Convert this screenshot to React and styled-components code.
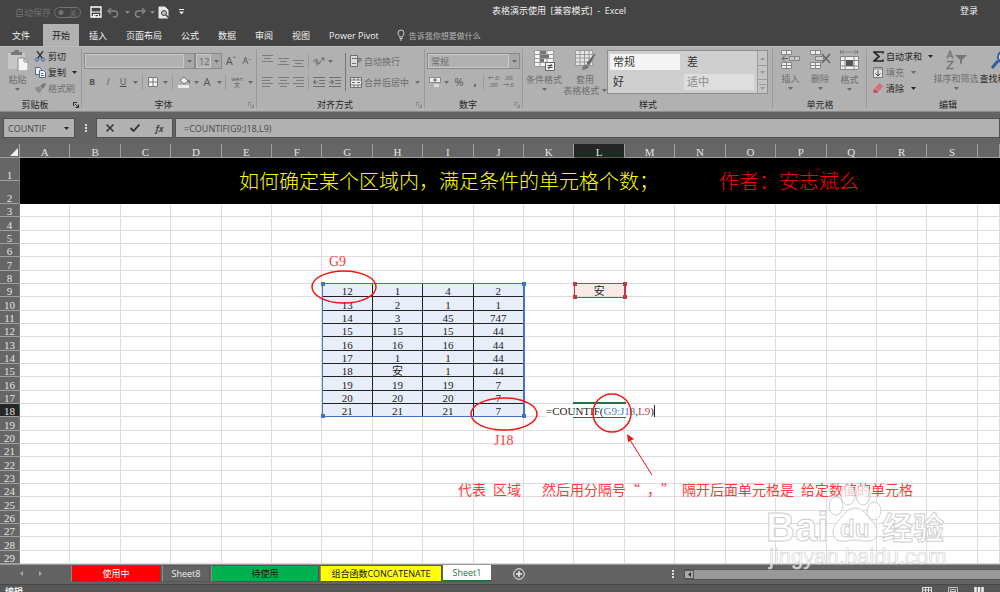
import React from "react";
import styled, { createGlobalStyle, css } from "styled-components";

const UI = `"Open Sans", "Noto Sans CJK SC", sans-serif`;
const SHEET = `"Liberation Serif", "Noto Sans CJK SC", serif`;

const Global = createGlobalStyle`
  *, *::before, *::after { box-sizing: border-box; }
  body { margin: 0; background: #636363; font-family: ${UI}; font-size: 9px; text-spacing-trim: space-all; }
  button, input, select { font: inherit; color: inherit; margin: 0; padding: 0; border: 0; background: none; border-radius: 0; }
  button { display: inline-flex; align-items: center; justify-content: center; white-space: nowrap; }
  svg { display: block; flex: none; }
`;

const Shell = styled.div`
  display: flex;
  flex-direction: column;
  height: 100vh;
  overflow: hidden;
  > * { flex: none; }
`;

/* ---------- title bar and tabs ---------- */
const TitleBar = styled.header`
  display: grid;
  grid-template-columns: 190px 1fr 72px;
  height: 24px;
  background: #444;
  color: #f0f0f0;
`;
const QuickAccess = styled.div`
  display: flex;
  align-items: center;
  padding-left: 15px;
`;
const AutoSave = styled.label`
  display: flex;
  align-items: center;
  gap: 3px;
  width: 76px;
  color: #717171;
`;
const Toggle = styled.input`
  appearance: none;
  width: 27px;
  height: 11px;
  border: 1px solid #717171;
  border-radius: 6px;
  background: radial-gradient(circle at 6px 50%, #717171 2px, transparent 3px);
`;
const ToggleState = styled.span`
  margin-left: -15px;
  font-size: 8px;
`;
const QuickButton = styled.button`
  width: ${(p) => p.$w}px;
  height: 16px;
`;
const DocTitle = styled.div`
  text-align: center;
  line-height: 21px;
  white-space: pre;
`;
const SignIn = styled.button`
  height: 21px;
  justify-self: start;
  margin-left: 32px;
`;
const TabBar = styled.nav`
  display: flex;
  gap: 1px;
  height: 22px;
  background: #444;
  color: #f0f0f0;
`;
const Tab = styled.button`
  padding: 0 9px;
  height: 22px;
  ${(p) => p.$file && css`width: 42px; justify-content: flex-start; padding-left: 12px;`}
  ${(p) => p.$active && css`background: #b1b1b1; color: #222;`}
`;
const TellMe = styled.button`
  gap: 4px;
  padding-left: 8px;
  font-size: 8px;
  color: #b8b8b8;
`;

/* ---------- ribbon ---------- */
const Ribbon = styled.div`
  display: flex;
  height: 66px;
  overflow: hidden;
  background: #b1b1b1;
  border-top: 1px solid #bcbcbc;
  border-bottom: 1px solid #8c8c8c;
  color: #6e6e6e;
`;
const Group = styled.section`
  position: relative;
  flex: ${(p) => (p.$grow ? "1 0 " : "0 0 ")}${(p) => p.$w}px;
  display: flex;
  flex-direction: column;
  padding-left: ${(p) => p.$pad || 0}px;
  &::after {
    content: "";
    position: absolute;
    right: 0;
    top: 2px;
    bottom: 3px;
    width: 1px;
    background: #999;
  }
`;
const GroupBody = styled.div`
  display: flex;
  height: 51px;
  padding-top: 1px;
`;
const GroupLabel = styled.h2`
  margin: 0 0 0 -${(p) => p.$pad || 0}px;
  font-size: 9px;
  font-weight: 400;
  line-height: 13px;
  text-align: center;
  color: #262626;
`;
const Launcher = styled.button`
  position: absolute;
  right: 3px;
  bottom: 3px;
`;
const Rows = styled.div`
  display: flex;
  flex-direction: column;
  padding-top: ${(p) => p.$top || 0}px;
`;
const Row = styled.div`
  display: flex;
  align-items: center;
  height: ${(p) => p.$h || 16}px;
`;
const Tool = styled.button`
  width: ${(p) => p.$w}px;
  height: 16px;
`;
const LetterTool = styled(Tool)`
  font-weight: ${(p) => (p.$bold ? 700 : 400)};
  font-style: ${(p) => (p.$italic ? "italic" : "normal")};
  text-decoration: ${(p) => (p.$under ? "underline" : "none")};
  font-size: ${(p) => p.$size || 9}px;
  line-height: ${(p) => p.$lh || 12}px;
  color: #555;
`;
const Divider = styled.span`
  width: 1px;
  height: ${(p) => p.$h || 15}px;
  margin: ${(p) => (p.$dark ? "0 4px 0 3px" : "0 2px")};
  background: ${(p) => (p.$dark ? "#777" : "#9a9a9a")};
`;
const BigButton = styled.button`
  flex-direction: column;
  justify-content: flex-start;
  width: ${(p) => p.$w}px;
  height: 46px;
  line-height: 11px;
  padding-top: 2px;
  color: ${(p) => (p.$on ? "#262626" : "inherit")};
  > svg:first-child { margin-bottom: 3px; }
  > svg:last-child:not(:first-child) { margin-top: 3px; }
`;
const SmallButton = styled.button`
  height: 16px;
  gap: ${(p) => p.$gap || 3}px;
  justify-content: flex-start;
  color: ${(p) => (p.$on ? "#262626" : "inherit")};
  > svg:last-child:not(:first-child) { margin-left: 4px; }
`;
const ComboBox = styled.span`
  display: flex;
  align-items: center;
  width: ${(p) => p.$w}px;
  height: 16px;
  border: 1px solid #8a8a8a;
  background: #a8a8a8;
`;
const ComboSelect = styled.select`
  appearance: none;
  flex: 1;
  min-width: 0;
  height: 14px;
  padding-left: 2px;
  border: 1px solid #c9c9c9;
  background: #b1b1b1;
`;
const ComboArrow = styled.span`
  display: flex;
  justify-content: center;
  width: 10px;
`;
const Gallery = styled.div`
  display: flex;
  width: 161px;
  height: 44px;
  margin-top: 2px;
  border: 1px solid #8e8e8e;
  background: #cfcfcf;
`;
const GalleryCells = styled.div`
  flex: 1;
  display: grid;
  grid-template-columns: 1fr 1fr;
  gap: 4px;
  padding: 3px 3px 3px 2px;
`;
const StyleCell = styled.button`
  justify-content: flex-start;
  padding-left: 3px;
  line-height: 14px;
  font-size: 11px;
  color: ${(p) => (p.$muted ? "#8a8a8a" : "#333")};
  background: ${(p) => p.$bg || "transparent"};
`;
const GalleryScroll = styled.div`
  display: grid;
  grid-template-rows: repeat(3, 1fr);
  width: 10px;
  border-left: 1px solid #9c9c9c;
  background: #c4c4c4;
  button + button { border-top: 1px solid #9c9c9c; }
`;

/* ---------- formula bar ---------- */
const FormulaBar = styled.div`
  display: flex;
  align-items: center;
  height: 32px;
  padding: 6px 0 6px 3px;
  background: #636363;
  color: #4a4a4a;
  > * { height: 20px; border: 1px solid #505050; background: #b1b1b1; }
`;
const NameBox = styled.label`
  display: flex;
  align-items: center;
  width: 72px;
  input { width: 60px; padding-left: 4px; }
`;
const Grip = styled.span`
  && { width: 21px; border: 0; background: none; display: grid; place-items: center; }
`;
const FormulaTools = styled.div`
  display: grid;
  grid-template-columns: repeat(3, 1fr);
  width: 77px;
  margin-right: 2px;
`;
const FormulaInput = styled.input`
  && { flex: 1; min-width: 0; padding-left: 8px; }
`;

/* ---------- worksheet ---------- */
const Worksheet = styled.main`
  position: relative;
  font-family: ${SHEET};
  font-size: 11px;
  background: #fff;
`;
const SheetTable = styled.table`
  width: 100%;
  table-layout: fixed;
  border-collapse: separate;
  border-spacing: 0;
  col:first-child { width: 20px; }
  col:last-child { width: 22px; }
`;
const SheetRow = styled.tr`
  height: ${(p) => p.$h}px;
`;
const Corner = styled.th`
  padding: 0;
  background: #666;
  border-bottom: 1px solid #a0a0a0;
  border-right: 1px solid #a0a0a0;
  svg { margin: 2px 0 0 10px; }
`;
const ColHead = styled.th`
  padding: 3px 0 0;
  font-weight: 400;
  line-height: 10px;
  color: #e4e4e4;
  background: ${(p) => (p.$on ? "#262626" : "#666")};
  border-right: 1px solid #a0a0a0;
  border-bottom: 1px solid ${(p) => (p.$on ? "#217346" : "#a0a0a0")};
`;
const RowHead = styled.th`
  padding: 2px 0 0;
  font-weight: 400;
  line-height: 10px;
  vertical-align: bottom;
  color: #e4e4e4;
  background: ${(p) => (p.$on ? "#262626" : "#666")};
  border-bottom: 1px solid #a0a0a0;
  border-right: 1px solid ${(p) => (p.$on ? "#217346" : "#777")};
`;
const Banner = styled.td`
  padding: 2px 0 0 219px;
  background: #000;
  font-size: 20px;
  font-weight: 300;
  line-height: 30px;
  white-space: nowrap;
  color: #ff0;
`;
const Author = styled.span`
  margin-left: 60px;
  color: #f00;
`;
const Cell = styled.td`
  padding: 2px 0 0;
  text-align: center;
  line-height: 10px;
  color: #222;
  border-right: 1px solid #dcdcdc;
  border-bottom: 1px solid #dcdcdc;
  ${(p) => p.$range && css`background: #e8eef9; border-color: #222;`}
  ${(p) => p.$criteria && css`background: #fae9e9;`}
`;

const Marquee = styled.div`
  position: absolute;
  left: ${(p) => p.$x}px;
  top: ${(p) => p.$y}px;
  width: ${(p) => p.$w}px;
  height: ${(p) => p.$h}px;
  border: solid ${(p) => p.$c};
  border-width: 1px 2px 1px 1px;
  i { position: absolute; width: 4px; height: 4px; background: ${(p) => p.$c}; }
  i:nth-child(1) { left: -2px; top: -2px; }
  i:nth-child(2) { right: -3px; top: -2px; }
  i:nth-child(3) { left: -2px; bottom: -2px; }
  i:nth-child(4) { right: -3px; bottom: -2px; }
`;
const ActiveCell = styled.div`
  position: absolute;
  left: 573px;
  top: 258px;
  width: 53px;
  height: 16px;
  border: solid #217346;
  border-width: 2px 0;
`;
const CellEditor = styled.div`
  position: absolute;
  left: 546px;
  top: 261px;
  height: 12px;
  line-height: 12px;
  background: #fff;
  color: #222;
  border-right: 1px solid #222;
  b { font-weight: 400; color: #4a78c8; }
  em { font-style: normal; color: #c8404a; }
`;
const Drawing = styled.svg`
  position: absolute;
  left: 0;
  top: 0;
  pointer-events: none;
`;
const Note = styled.div`
  position: absolute;
  left: ${(p) => p.$x}px;
  top: ${(p) => p.$y}px;
  font-size: 14px;
  font-weight: ${(p) => (p.$cjk ? 400 : 300)};
  line-height: 20px;
  white-space: pre;
  color: #ff3a3a;
  font-family: ${(p) => (p.$cjk ? `"Noto Sans CJK SC", sans-serif` : SHEET)};
`;
const Watermark = styled.svg`
  position: absolute;
  left: 760px;
  top: 340px;
  z-index: 2;
  pointer-events: none;
`;

/* ---------- sheet tabs and status ---------- */
const SheetBar = styled.footer`
  display: flex;
  height: 20px;
  border-top: 1px solid #999;
  background: #636363;
`;
const SheetNav = styled.div`
  display: flex;
  width: 71px;
  padding-left: 12px;
  button { width: 19px; height: 17px; }
`;
const SheetTab = styled.button`
  width: ${(p) => p.$w}px;
  height: 17px;
  margin-right: 1px;
  padding-bottom: 1px;
  border: 1px solid #555;
  border-left-color: #8a8a8a;
  background: ${(p) => p.$bg || "#636363"};
  color: ${(p) => p.$c};
  ${(p) => p.$active && css`border: 0; border-bottom: 2px solid #217346;`}
`;
const AddSheet = styled.button`
  width: 54px;
  height: 17px;
`;
const ScrollArea = styled.div`
  display: flex;
  align-items: center;
  width: 328px;
  margin-left: auto;
  gap: 10px;
`;
const ScrollTrack = styled.div`
  flex: 1;
  display: flex;
  height: 11px;
  background: #999;
  border: solid #555;
  border-width: 1px 0;
  button { width: 10px; border: 1px solid #555; background: #a9a9a9; }
`;
const StatusBar = styled.div`
  display: flex;
  justify-content: space-between;
  height: 18px;
  padding: 0 16px 0 5px;
  border-top: 1px solid #484848;
  background: #575757;
  color: #f0f0f0;
  font-weight: 600;
  line-height: 14px;
`;
const Views = styled.div`
  display: flex;
  gap: 16px;
  padding-top: 2px;
`;

/* ---------- icons ---------- */
const Caret = ({ c = "#6a6a6a" }) => (
  <svg width="5" height="3" viewBox="0 0 5 3"><path d="M0 0h5L2.500 3z" fill={c} /></svg>
);
const DARK = "#262626";
const I = ({ w, h, s = "#6e6e6e", children }) => (
  <svg width={w} height={h} viewBox={`0 0 ${w} ${h}`} fill="none" stroke={s}>{children}</svg>
);
const Lines = ({ ys, xs = [] }) => (
  <I w={11} h={12} s="#7c7c7c">{ys.map((y, i) => <path key={y} d={`M${xs[i] ? xs[i][0] : 0} ${y + 0.5}H${xs[i] ? xs[i][1] : 11}`} />)}</I>
);
const LauncherIcon = ({ c = "#8a8a8a" }) => (
  <I w={6} h={6} s={c}><path d="M.5 4V.5H4M2 2l3 3M5.500 2.500v3h-3" /></I>
);
const SaveIcon = () => (
  <I w={12} h={12} s="#fff"><path d="M1 1h10v10H1z" strokeWidth="1.300" /><path d="M1 6h10" /><path d="M3.500 11V8.500h5V11" /><path d="M5 9v2" /></I>
);
const UndoIcon = ({ flip }) => (
  <svg width="12" height="11" viewBox="0 0 12 11" fill="none" stroke="#858585" strokeWidth="1.400">
    <path d={flip ? "M11 4H4.500a3 3 0 0 0 0 6H6M8 1l3 3-3 3" : "M1 4h6.500a3 3 0 0 1 0 6H6M4 1L1 4l3 3"} />
  </svg>
);
const PreviewIcon = () => (
  <I w={11} h={13} s="#e8e8e8"><path d="M1 1h6l3 3v8H1z" fill="#e8e8e8" /><circle cx="6" cy="7" r="2.500" fill="#bbb" stroke="#444" /><path d="M8 9l3 3" stroke="#444" strokeWidth="1.500" /></I>
);
const CustomizeIcon = () => (
  <I w={5} h={6} s="none"><path d="M0 0h5v1H0zM0 2.500h5L2.500 5.500z" fill="#e8e8e8" /></I>
);
const BulbIcon = () => (
  <I w={8} h={12} s="#d0d0d0"><path d="M2.500 8C2.500 6.500 1 6 1 4a3 3 0 0 1 6 0c0 2-1.500 2.500-1.500 4zM2.500 9.500h3M3 11h2" /></I>
);
const PasteIcon = () => (
  <I w={20} h={21} s="none"><path d="M0 3h17v16H0z" fill="#c6c6c6" /><path d="M3 2h3a2.500 2.500 0 0 1 5 0h3v3H3z" fill="#777" /><path d="M10 8h6l4 4v9H10z" fill="#f4f4f4" stroke="#8a8a8a" /><path d="M16 8v4h4" stroke="#8a8a8a" /></I>
);
const CutIcon = () => (
  <I w={10} h={11} s="#333"><path d="M2 0l5 7M8 0L3 7" strokeWidth="1.300" /><circle cx="2" cy="8.500" r="1.600" stroke="#2f6aa8" /><circle cx="8" cy="8.500" r="1.600" stroke="#2f6aa8" /></I>
);
const CopyIcon = () => (
  <I w={11} h={11} s="#4c6e92"><path d="M.5.5h4l2 2v5h-6z" fill="#eee" /><path d="M4.500 3.500h4l2 2v5h-6z" fill="#eee" /><path d="M6 6.500h2M6 8.500h3" /></I>
);
const BrushIcon = () => (
  <I w={11} h={11} s="none"><path d="M0 5l4-2 3 3-2 4C3 10 1 8 0 5z" fill="#8c8c8c" /><path d="M5 3l4-3 2 1-3 5z" fill="#777" /></I>
);
const BordersIcon = () => (
  <I w={10} h={10} s="#7a7a7a"><path d="M.5.5h9v9h-9z" fill="#f2f2f2" /><path d="M5 0v10M0 5h10" /></I>
);
const FillIcon = () => (
  <I w={12} h={12} s="#777"><path d="M2 4l4-3 4 4-4 3z" fill="#eee" /><path d="M10 4q2 2 1 3" strokeWidth="2" /><path d="M0 10.500h11" stroke="#eaeaea" strokeWidth="3" /></I>
);
const OrientIcon = () => (
  <I w={13} h={11}><path d="M1 6a2 2 0 1 1 3 1M5 4a2 2 0 1 0 2 2M3 10l8-8M8 2h3v3" /></I>
);
const IndentIcon = ({ right }) => (
  <I w={12} h={10}><path d="M0 .5h12M6 3.500h6M6 6.500h6M0 9.500h12" /><path d={right ? "M0 5h4M2.500 3L4.500 5 2.500 7" : "M5 5H1M2.500 3L.5 5l2 2"} strokeWidth="1.200" /></I>
);
const WrapIcon = () => (
  <I w={12} h={12}><path d="M.5.5h7v11h-7z" fill="#ddd" /><path d="M2 3.500h9v2.500H8M2 8.500h4" /><path d="M9.500 4.500L8 6l1.500 1.500" /></I>
);
const MergeIcon = () => (
  <I w={12} h={11}><path d="M.5.5h11v10H.5z" fill="#eee" /><path d="M0 3h12M0 8h12M4 0v3M8 0v3M4 8v3M8 8v3M2 5.500h3M7 5.500h3" /></I>
);
const MoneyIcon = () => (
  <I w={12} h={11} s="#8a8a8a"><path d="M.5.5h11v5H.5z" fill="#eee" /><circle cx="6" cy="3" r="1.300" fill="#777" /><path d="M5 7h5v3H5z" fill="#ddd" stroke="none" /></I>
);
const CondIcon = () => (
  <I w={21} h={21} s="#9a9a9a"><path d="M.5.5h19v16H.5z" fill="#f2f2f2" /><path d="M6 0v17M13 0v17M0 4.500h20M0 8.500h20M0 12.500h20" /><path d="M6 1h6v3H6zM6 5h9v3H6zM6 9h4v3H6z" fill="#757575" stroke="none" /><path d="M11.500 12.500h9v8h-9z" fill="#f5f5f5" stroke="#666" /><path d="M13.500 15.500h5M13.500 17.500h5M17.500 14l-3 5" stroke="#444" /></I>
);
const TableStyleIcon = () => (
  <I w={21} h={21} s="#9a9a9a"><path d="M.5.5h17v15H.5z" fill="#e6e6e6" /><path d="M5 0v16M9.500 0v16M14 0v16M0 4.500h18M0 8h18M0 12h18" /><path d="M20 4l-8 9 2 2z" fill="#666" stroke="#666" /><path d="M12 14l2 3q-3 3-8 3 2-1 2-4z" fill="#757575" stroke="none" /></I>
);
const cells = "M.5.5h10v4H.5zM5.500.5v4";
const InsertIcon = () => (
  <I w={19} h={20} s="#858585"><path d={cells} fill="#eee" /><path d="M8.500 6.500h10v4h-10zM13.500 6.500v4" fill="#c9c9c9" /><path d="M.5 12.500h10v6H.5zM5.500 12.500v6M.5 15.500h10" fill="#eee" /><path d="M7 8.500H1M4 5.500l-3 3 3 3" stroke="#666" /></I>
);
const DeleteIcon = () => (
  <I w={21} h={20} s="#858585"><path d={cells} fill="#eee" /><path d="M5.500 6.500h8v4h-8z" fill="#c9c9c9" /><path d="M.5 12.500h10v6H.5zM5.500 12.500v6M.5 15.500h10" fill="#eee" /><path d="M12 4l8 9M20 4l-8 9" strokeWidth="1.500" stroke="#666" /></I>
);
const FormatIcon = () => (
  <I w={20} h={21} s="#858585"><path d="M1 2h16M4 0L1 2l3 2M14 0l3 2-3 2M.5 0v4M17.500 0v4" /><path d="M.5 6.500h18v13H.5z" fill="#f0f0f0" /><path d="M5 6v14M14 6v14M0 10.500h19M0 16h19" /><path d="M6 10h7v6H6z" fill="#555" stroke="none" /></I>
);
const SigmaIcon = () => (
  <I w={11} h={11} s={DARK}><path d="M10 2.500V1H1l5 4.500L1 10h9V8.500" strokeWidth="1.700" /></I>
);
const FillDownIcon = () => (
  <I w={10} h={11} s="#777"><path d="M.5.5h9v10h-9z" fill="#e6e6e6" /><path d="M0 2h10" /><path d="M5 3.500V9M2.500 6.500L5 9l2.500-2.500" stroke="#444" /></I>
);
const EraserIcon = () => (
  <I w={10} h={10} s="none"><path d="M6 0l4 3-4 5-4-3z" fill="#e0697a" /><path d="M1.500 5.500l4 3L4 10H1L0 8z" fill="#ca4e62" /></I>
);
const SortIcon = () => (
  <I w={21} h={20} s="#777"><path d="M1 8.500L4 1l3 7.500M2 6h4M1 11.500h6L1 18.500h6.500" strokeWidth="1.400" /><path d="M9 5h12l-5 5v5l-2-2v-3z" fill="#777" stroke="none" /></I>
);
const FindIcon = () => (
  <I w={22} h={20} s="#2d619c"><path d="M1 18l6-7" strokeWidth="3" /><circle cx="13" cy="7" r="6" fill="#eee" strokeWidth="2" /></I>
);

const Combo = ({ w, label, value }) => (
  <ComboBox $w={w}>
    <ComboSelect aria-label={label}><option>{value}</option></ComboSelect>
    <ComboArrow><Caret /></ComboArrow>
  </ComboBox>
);

const COLS = "ABCDEFGHIJKLMNOPQRS".split("");
const DATA = [
  ["12", "1", "4", "2"],
  ["13", "2", "1", "1"],
  ["14", "3", "45", "747"],
  ["15", "15", "15", "44"],
  ["16", "16", "16", "44"],
  ["17", "1", "1", "44"],
  ["18", "安", "1", "44"],
  ["19", "19", "19", "7"],
  ["20", "20", "20", "7"],
  ["21", "21", "21", "7"],
];
const BODY_ROWS = Array.from({ length: 27 }, (_, i) => i + 3);

const SheetCell = ({ row, col }) => {
  const inRange = row >= 9 && row <= 18 && col >= 6 && col <= 9;
  const criteria = row === 9 && col === 11;
  return (
    <Cell $range={inRange} $criteria={criteria}>
      {inRange ? DATA[row - 9][col - 6] : criteria ? "安" : null}
    </Cell>
  );
};

export default function App() {
  return (
    <Shell>
      <Global />
      <TitleBar>
        <QuickAccess>
          <AutoSave>自动保存<Toggle type="checkbox" /><ToggleState>关</ToggleState></AutoSave>
          <QuickButton $w={12} aria-label="保存"><SaveIcon /></QuickButton>
          <QuickButton $w={24} aria-label="撤消"><UndoIcon /></QuickButton>
          <Caret c="#858585" />
          <QuickButton $w={20} aria-label="恢复"><UndoIcon flip /></QuickButton>
          <Caret c="#858585" />
          <QuickButton $w={18} aria-label="打印预览"><PreviewIcon /></QuickButton>
          <QuickButton $w={18} aria-label="自定义快速访问工具栏"><CustomizeIcon /></QuickButton>
        </QuickAccess>
        <DocTitle>表格演示使用  [兼容模式]  -  Excel</DocTitle>
        <SignIn>登录</SignIn>
      </TitleBar>
      <TabBar>
        <Tab $file>文件</Tab>
        <Tab $active>开始</Tab>
        {["插入", "页面布局", "公式", "数据", "审阅", "视图", "Power Pivot"].map((t) => <Tab key={t}>{t}</Tab>)}
        <TellMe><BulbIcon />告诉我你想要做什么</TellMe>
      </TabBar>

      <Ribbon>
        <Group $w={82}>
          <GroupBody>
            <BigButton $w={35}><PasteIcon />粘贴<Caret /></BigButton>
            <Rows>
              <SmallButton $on><CutIcon />剪切</SmallButton>
              <SmallButton $on $gap={2}><CopyIcon />复制<Caret c={DARK} /></SmallButton>
              <SmallButton $gap={2}><BrushIcon />格式刷</SmallButton>
            </Rows>
          </GroupBody>
          <GroupLabel $pad={12}>剪贴板</GroupLabel>
          <Launcher aria-label="剪贴板设置"><LauncherIcon c={DARK} /></Launcher>
        </Group>

        <Group $w={175} $pad={2}>
          <GroupBody>
            <Rows $top={5}>
              <Row>
                <Combo w={111} label="字体" value="" />
                <Combo w={27} label="字号" value="12" />
                <LetterTool $w={18} $size={11}>A<sup>ˆ</sup></LetterTool>
                <LetterTool $w={14}>A<sup>ˇ</sup></LetterTool>
              </Row>
              <Row $h={26}>
                <LetterTool $w={16} $bold>B</LetterTool>
                <LetterTool $w={16} $italic>I</LetterTool>
                <LetterTool $w={14} $under>U</LetterTool>
                <Tool $w={10} aria-label="下划线选项"><Caret /></Tool>
                <Divider />
                <Tool $w={16} aria-label="边框"><BordersIcon /></Tool>
                <Tool $w={9} aria-label="边框选项"><Caret /></Tool>
                <Divider />
                <Tool $w={18} aria-label="填充颜色"><FillIcon /></Tool>
                <Tool $w={6} aria-label="填充选项"><Caret /></Tool>
                <LetterTool $w={16} $size={11}>A</LetterTool>
                <Tool $w={8} aria-label="字体颜色选项"><Caret /></Tool>
                <Divider />
                <LetterTool $w={18} $size={6} $lh={6}>wén<br />文</LetterTool>
                <Tool $w={8} aria-label="拼音选项"><Caret /></Tool>
              </Row>
            </Rows>
          </GroupBody>
          <GroupLabel $pad={14}>字体</GroupLabel>
          <Launcher aria-label="字体设置"><LauncherIcon /></Launcher>
        </Group>

        <Group $w={168} $pad={3}>
          <GroupBody>
            <Rows $top={5}>
              <Row>
                <Tool $w={15} aria-label="顶端对齐"><Lines ys={[0, 3, 6]} xs={[, [2, 9]]} /></Tool>
                <Tool $w={16} aria-label="垂直居中"><Lines ys={[3, 6, 9]} xs={[, [2, 9]]} /></Tool>
                <Tool $w={15} aria-label="底端对齐"><Lines ys={[5, 8, 11]} xs={[, [2, 9]]} /></Tool>
                <Divider />
                <Tool $w={16} aria-label="方向"><OrientIcon /></Tool>
                <Tool $w={6} aria-label="方向选项"><Caret /></Tool>
              </Row>
              <Row $h={26}>
                <Tool $w={15} aria-label="左对齐"><Lines ys={[1, 4, 7, 10]} xs={[, [0, 8], , [0, 8]]} /></Tool>
                <Tool $w={16} aria-label="居中"><Lines ys={[1, 4, 7, 10]} xs={[, [2, 9], , [2, 9]]} /></Tool>
                <Tool $w={15} aria-label="右对齐"><Lines ys={[1, 4, 7, 10]} xs={[, [3, 11], , [3, 11]]} /></Tool>
                <Divider />
                <Tool $w={16} aria-label="减少缩进"><IndentIcon /></Tool>
                <Tool $w={15} aria-label="增加缩进"><IndentIcon right /></Tool>
              </Row>
            </Rows>
            <Row $h={48}><Divider $h={38} $dark /></Row>
            <Rows $top={5}>
              <Row><SmallButton $gap={2}><WrapIcon />自动换行</SmallButton></Row>
              <Row $h={26}><SmallButton $gap={2}><MergeIcon />合并后居中<Caret /></SmallButton></Row>
            </Rows>
          </GroupBody>
          <GroupLabel $pad={15}>对齐方式</GroupLabel>
          <Launcher aria-label="对齐设置"><LauncherIcon /></Launcher>
        </Group>

        <Group $w={98} $pad={2}>
          <GroupBody>
            <Rows $top={5}>
              <Row><Combo w={93} label="数字格式" value="常规" /></Row>
              <Row $h={26}>
                <Tool $w={16} aria-label="会计格式"><MoneyIcon /></Tool>
                <Tool $w={6} aria-label="会计选项"><Caret /></Tool>
                <LetterTool $w={20} $size={11}>%</LetterTool>
                <LetterTool $w={12} $size={11} $bold>,</LetterTool>
                <Divider />
                <LetterTool $w={15} $size={6} $lh={7} aria-label="增加小数位数">←.0<br />.00</LetterTool>
                <LetterTool $w={15} $size={6} $lh={7} aria-label="减少小数位数">.00<br />→.0</LetterTool>
              </Row>
            </Rows>
          </GroupBody>
          <GroupLabel $pad={14}>数字</GroupLabel>
          <Launcher aria-label="数字设置"><LauncherIcon /></Launcher>
        </Group>

        <Group $w={250} $pad={2}>
          <GroupBody>
            <BigButton $w={38}><CondIcon />条件格式<Caret /></BigButton>
            <BigButton $w={44}><TableStyleIcon />套用<Row $h={11}>表格格式&nbsp;<Caret /></Row></BigButton>
            <Gallery>
              <GalleryCells>
                <StyleCell $bg="#f4f4f4">常规</StyleCell>
                <StyleCell>差</StyleCell>
                <StyleCell>好</StyleCell>
                <StyleCell $bg="#dedede" $muted>适中</StyleCell>
              </GalleryCells>
              <GalleryScroll>
                <button aria-label="上一行">
                  <svg width="5" height="3"><path d="M0 3h5L2.500 0z" fill="#999" /></svg>
                </button>
                <button aria-label="下一行"><Caret c="#999" /></button>
                <button aria-label="其他">
                  <svg width="7" height="6"><path d="M0 0h7v1H0zM1 3h5L3.500 6z" fill="#999" /></svg>
                </button>
              </GalleryScroll>
            </Gallery>
          </GroupBody>
          <GroupLabel $pad={2}>样式</GroupLabel>
        </Group>

        <Group $w={94} $pad={3}>
          <GroupBody>
            <BigButton $w={29}><InsertIcon />插入<Caret /></BigButton>
            <BigButton $w={30}><DeleteIcon />删除<Caret /></BigButton>
            <BigButton $w={29}><FormatIcon />格式<Caret /></BigButton>
          </GroupBody>
          <GroupLabel $pad={3}>单元格</GroupLabel>
        </Group>

        <Group $w={162} $pad={6} $grow>
          <GroupBody>
            <Rows>
              <SmallButton $on $gap={2}><SigmaIcon />自动求和<Caret c={DARK} /></SmallButton>
              <SmallButton><FillDownIcon />填充<Caret /></SmallButton>
              <SmallButton $on><EraserIcon />清除<Caret c={DARK} /></SmallButton>
            </Rows>
            <BigButton $w={46}><SortIcon />排序和筛选<Caret /></BigButton>
            <BigButton $w={46} $on><FindIcon />查找和选择<Caret c={DARK} /></BigButton>
          </GroupBody>
          <GroupLabel $pad={6}>编辑</GroupLabel>
        </Group>
      </Ribbon>

      <FormulaBar>
        <NameBox>
          <input aria-label="名称框" defaultValue="COUNTIF" />
          <Caret c={DARK} />
        </NameBox>
        <Grip>
          <svg width="2" height="9" fill="#ddd"><path d="M0 0h2v2H0zM0 3h2v2H0zM0 6h2v2H0z" /></svg>
        </Grip>
        <FormulaTools>
          <button aria-label="取消"><I w={8} h={8} s="#333"><path d="M.5.5l7 7M7.500.5l-7 7" strokeWidth="1.500" /></I></button>
          <button aria-label="输入"><I w={10} h={8} s="#333"><path d="M.5 4L3.500 7l6-6.500" strokeWidth="1.800" /></I></button>
          <button aria-label="插入函数"><i><b>fx</b></i></button>
        </FormulaTools>
        <FormulaInput aria-label="编辑栏" defaultValue="=COUNTIF(G9:J18,L9)" />
      </FormulaBar>

      <Worksheet>
        <SheetTable>
          <colgroup>
            <col />
            {COLS.map((c) => <col key={c} />)}
            <col />
          </colgroup>
          <thead>
            <SheetRow $h={14}>
              <Corner aria-label="全选"><svg width="8" height="8"><path d="M8 0v8H0z" fill="#f0f0f0" /></svg></Corner>
              {COLS.map((c) => <ColHead key={c} $on={c === "L"}>{c}</ColHead>)}
              <ColHead />
            </SheetRow>
          </thead>
          <tbody>
            <SheetRow $h={23}>
              <RowHead>1</RowHead>
              <Banner colSpan={20} rowSpan={2}>
                如何确定某个区域内，满足条件的单元格个数；<Author>作者：安志斌么</Author>
              </Banner>
            </SheetRow>
            <SheetRow $h={23}><RowHead>2</RowHead></SheetRow>
            {BODY_ROWS.map((r) => (
              <SheetRow key={r} $h={r % 3 === 1 ? 14 : 13}>
                <RowHead $on={r === 18}>{r}</RowHead>
                {COLS.map((c, i) => <SheetCell key={c} row={r} col={i} />)}
                <Cell />
              </SheetRow>
            ))}
          </tbody>
        </SheetTable>

        <Marquee $x={322} $y={139} $w={203} $h={134} $c="#4273c5"><i /><i /><i /><i /></Marquee>
        <Marquee $x={574} $y={139} $w={52} $h={15} $c="#c23a48"><i /><i /><i /><i /></Marquee>
        <ActiveCell />
        <CellEditor>=COUNTIF(<b>G9:J18</b>,<em>L9</em>)</CellEditor>
        <Drawing width="1000" height="420" fill="none" stroke="#f51414" strokeWidth="1.500">
          <ellipse cx="344" cy="143" rx="32" ry="16" />
          <ellipse cx="504" cy="270" rx="33" ry="16" />
          <circle cx="612" cy="269" r="19" />
          <path d="M652 331L630 296" strokeWidth="1" />
          <path d="M627 290l7 5-6 3z" fill="#f51414" stroke="none" />
        </Drawing>
        <Note $x={329} $y={108}>G9</Note>
        <Note $x={494} $y={287}>J18</Note>
        <Note $cjk $x={458} $y={335}>代表{"\u2002"}区域{"\u2002\u2002\u2002"}然后用分隔号“{"\u2002"}，”{"\u2002"}隔开后面单元格是{"\u2002"}给定数值的单元格</Note>
        <Watermark width="200" height="95" fill="#ffffff" fillOpacity="0.700" stroke="#cfcfcf" strokeWidth="1">
          <ellipse cx="76" cy="22" rx="7" ry="9" />
          <ellipse cx="88" cy="11" rx="7" ry="10" />
          <ellipse cx="103" cy="11" rx="7" ry="10" />
          <ellipse cx="114" cy="27" rx="7" ry="9" />
          <path d="M95 24c8 0 12 8 17 13 8 8 6 20-3 20-6 1-9-1-14-1s-8 2-14 1c-9 0-11-12-3-20 5-5 9-13 17-13z" />
          <text x="6" y="57" fontFamily="Liberation Sans, sans-serif" fontWeight="700" fontSize="40">Bai</text>
          <text x="80" y="53" fontFamily="Liberation Sans, sans-serif" fontWeight="700" fontSize="24">du</text>
          <text x="122" y="55" fontFamily="Noto Sans CJK SC, sans-serif" fontWeight="700" fontSize="31">经验</text>
          <text x="9" y="80" fontFamily="Liberation Sans, sans-serif" fontSize="22" strokeWidth="0.600">jingyan.baidu.com</text>
        </Watermark>
      </Worksheet>

      <SheetBar>
        <SheetNav>
          <button aria-label="上一个工作表"><svg width="3" height="5"><path d="M3 0v5L0 2.500z" fill="#aaa" /></svg></button>
          <button aria-label="下一个工作表"><svg width="3" height="5"><path d="M0 0v5l3-2.500z" fill="#aaa" /></svg></button>
        </SheetNav>
        <SheetTab $w={90} $bg="#ff0000" $c="#fff">使用中</SheetTab>
        <SheetTab $w={48} $c="#f0f0f0">Sheet8</SheetTab>
        <SheetTab $w={108} $bg="#00b050" $c="#111">待使用</SheetTab>
        <SheetTab $w={122} $bg="#ffff00" $c="#111">组合函数CONCATENATE</SheetTab>
        <SheetTab $w={48} $bg="#fff" $c="#217346" $active>Sheet1</SheetTab>
        <AddSheet aria-label="新建工作表"><I w={12} h={12} s="#eee"><circle cx="6" cy="6" r="5.300" /><path d="M6 3v6M3 6h6" strokeWidth="1.500" /></I></AddSheet>
        <ScrollArea>
          <svg width="2" height="9" fill="#ddd"><path d="M0 0h2v2H0zM0 3h2v2H0zM0 6h2v2H0z" /></svg>
          <ScrollTrack><button aria-label="向左滚动"><svg width="3" height="5"><path d="M3 0v5L0 2.500z" fill="#333" /></svg></button></ScrollTrack>
        </ScrollArea>
      </SheetBar>
      <StatusBar>
        <span>编辑</span>
        <Views>
          <I w={10} h={9} s="#e4e4e4"><path d="M.5.5h9v8h-9zM3.500 0v9M6.500 0v9M0 3h10M0 6h10" /></I>
          <I w={10} h={9} s="#c4c4c4"><path d="M.5.5h9v8h-9zM2.500 2.500h5v6h-5zM3 4.500h4M3 6.500h4" /></I>
          <I w={10} h={9} s="#f0f0f0"><path d="M1.500 0v9M5 0v5M8.500 0v9" strokeWidth="2.500" /></I>
        </Views>
      </StatusBar>
    </Shell>
  );
}
